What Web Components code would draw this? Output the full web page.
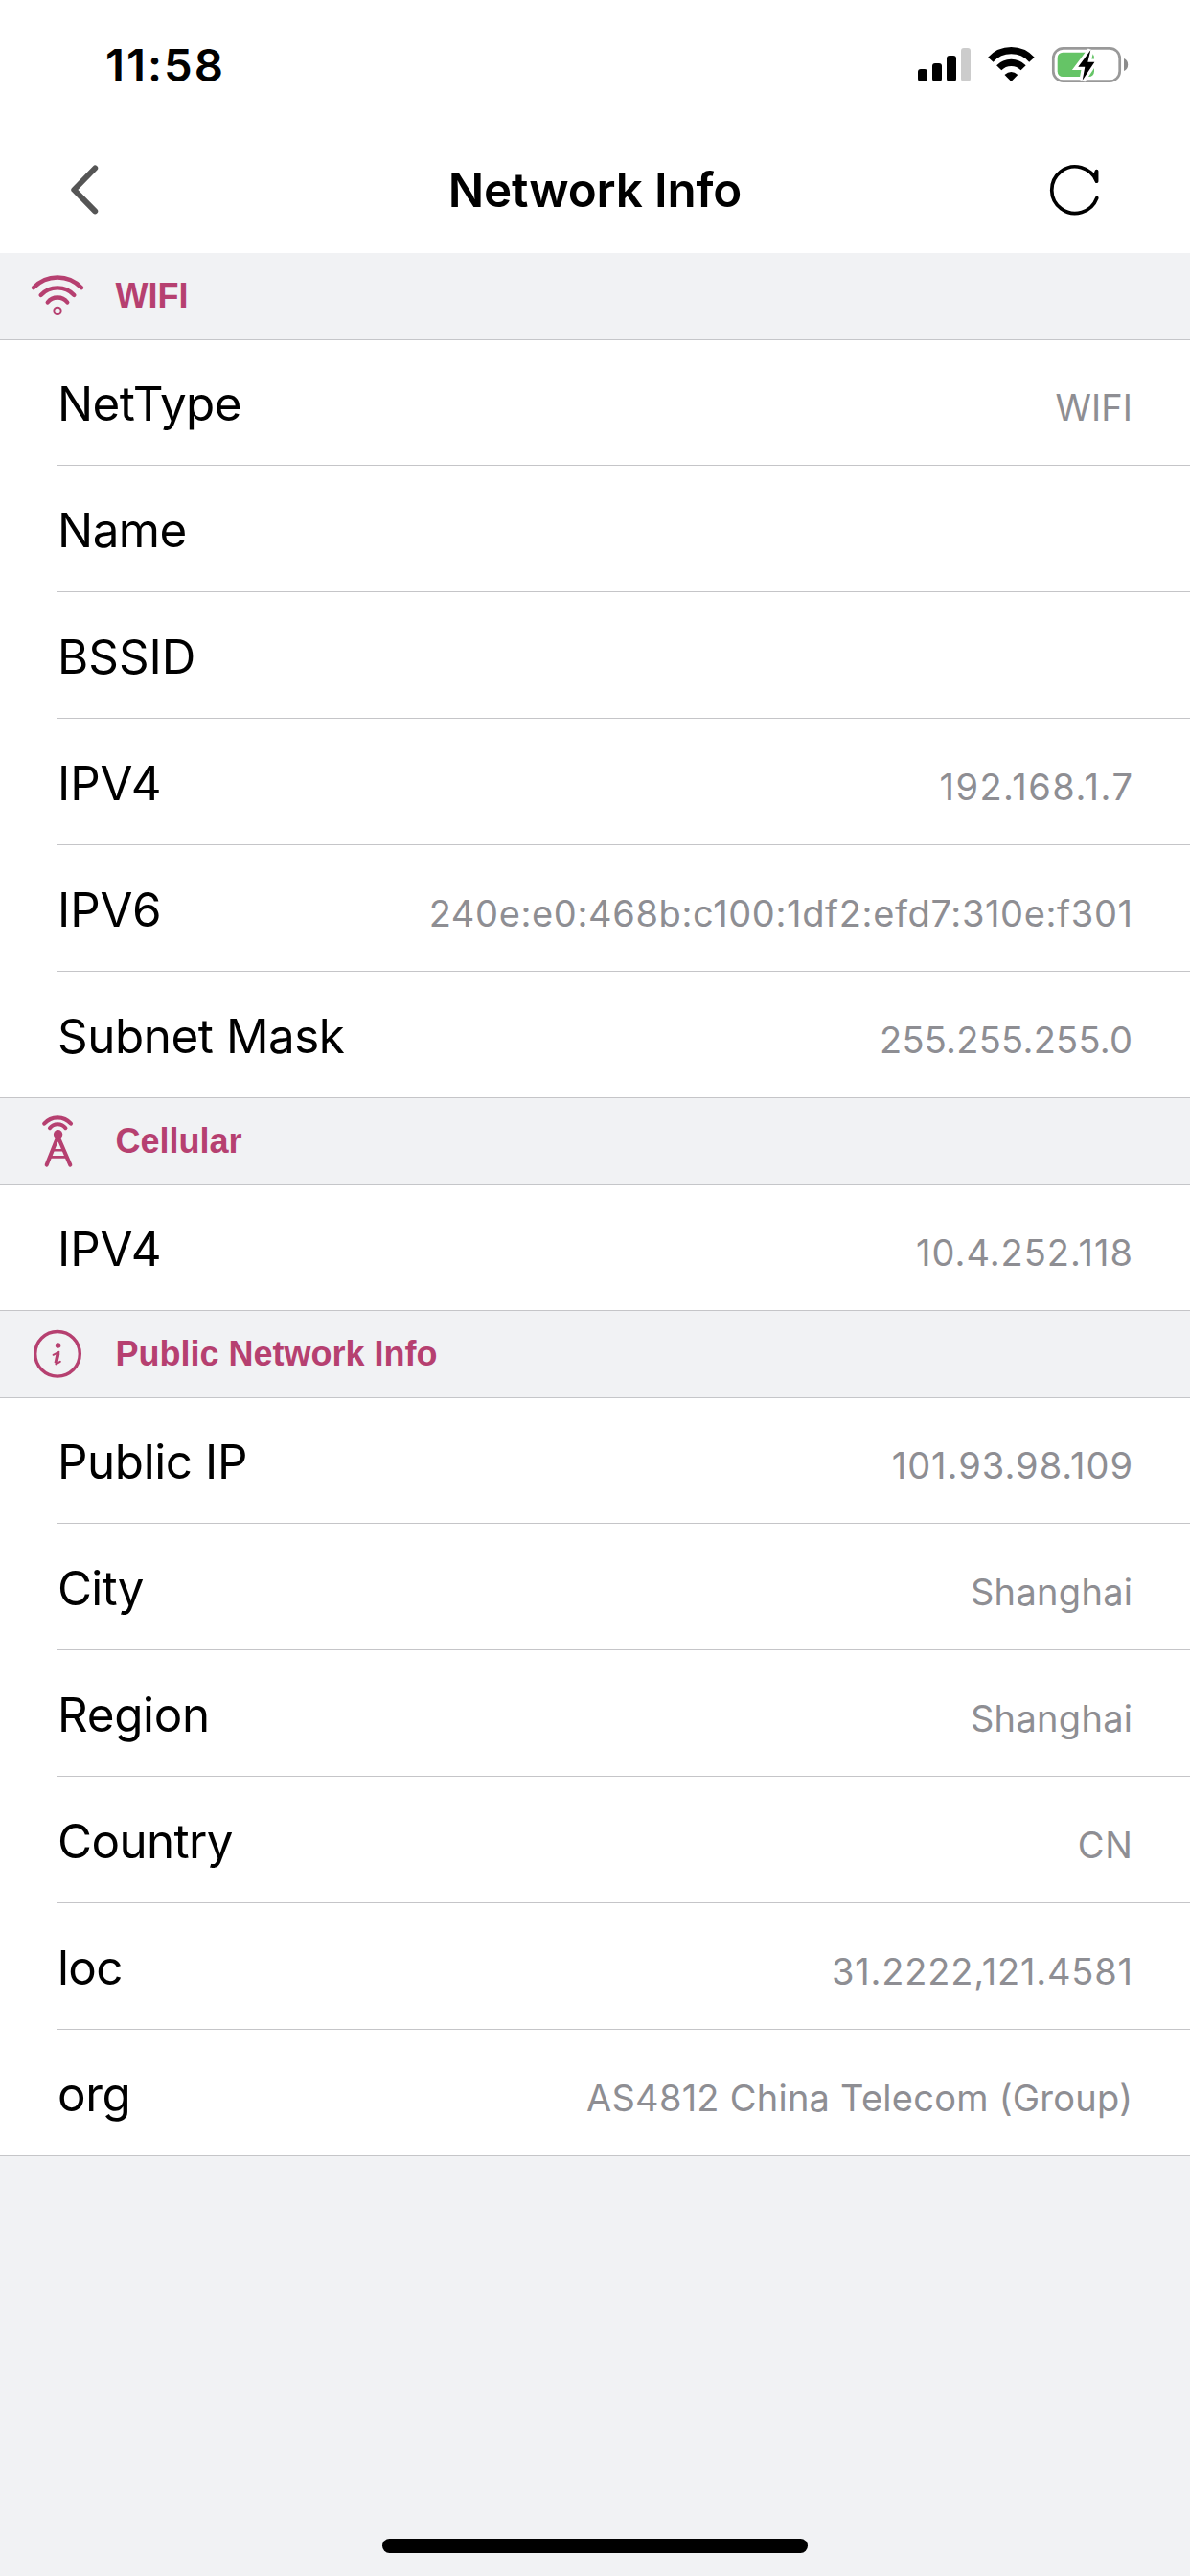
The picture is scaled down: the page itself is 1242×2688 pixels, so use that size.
<!DOCTYPE html>
<html lang="en">
<head>
<meta charset="utf-8">
<title>Network Info</title>
<style>
html,body{margin:0;height:100%}
body{background:#f1f2f4;color:#000;font-family:Inter,"Liberation Sans",sans-serif}
</style>
</head>
<body>
<net-screen>
  <status-bar slot="top">11:58</status-bar>
  <nav-bar slot="top">Network Info</nav-bar>
  <info-section icon="wifi" label="WIFI">
    <info-row label="NetType" ls="-.54" vs=".1">WIFI</info-row>
    <info-row label="Name" ls="-.5"></info-row>
    <info-row label="BSSID" ls="0"></info-row>
    <info-row label="IPV4" ls="-.1" vs="1.5">192.168.1.7</info-row>
    <info-row label="IPV6" ls="-.1" vs=".64">240e:e0:468b:c100:1df2:efd7:310e:f301</info-row>
    <info-row label="Subnet Mask" ls="-.42" vs=".26">255.255.255.0</info-row>
  </info-section>
  <info-section icon="tower" label="Cellular">
    <info-row label="IPV4" ls="-.1" vs=".98">10.4.252.118</info-row>
  </info-section>
  <info-section icon="info" label="Public Network Info">
    <info-row label="Public IP" ls="-.38" vs="1">101.93.98.109</info-row>
    <info-row label="City" ls="-.75" vs=".3">Shanghai</info-row>
    <info-row label="Region" ls="-.3" vs=".3">Shanghai</info-row>
    <info-row label="Country" ls="-.58" vs=".9">CN</info-row>
    <info-row label="loc" ls="-.6" vs=".81">31.2222,121.4581</info-row>
    <info-row label="org" ls="-.4" vs=".25">AS4812 China Telecom (Group)</info-row>
  </info-section>
  <home-indicator slot="bottom"></home-indicator>
</net-screen>
<script>
const define = (name, render) => customElements.define(name, class extends HTMLElement {
  connectedCallback() {
    if (!this.shadowRoot) this.attachShadow({mode: 'open'}).innerHTML = render(this);
  }
});

const icons = {
  wifi: `<g fill="none" stroke="currentColor" stroke-width="4.3" stroke-linecap="round">
    <path d="M34.9 36.3A34.6 34.6 0 0 1 85.1 36.3M42.6 44A23.7 23.7 0 0 1 77.4 44M49.7 51.5A13.1 13.1 0 0 1 70.3 51.5"/>
    <circle cx="60" cy="60.4" r="3.7" stroke-width="2"/></g>`,
  tower: `<g fill="none" stroke="currentColor" stroke-width="4.1" stroke-linecap="round">
    <path d="M46.2 26.7A18.4 18.4 0 0 1 74 26.7M52 31.2A10.5 10.5 0 0 1 68.4 31.2"/>
    <path d="M60.5 40L48.7 69.6M60.5 40L73.3 69.6"/>
    <path d="M55 54.3H66.5M52.5 61.4H69.5" stroke-width="2.6"/></g>
    <circle cx="60.6" cy="37.8" r="4.7" fill="currentColor"/>`,
  info: `<g fill="none" stroke="currentColor">
    <circle cx="60" cy="44.8" r="23.3" stroke-width="3.4"/>
    <path d="M55.6 45.8L61.4 42.8L58.4 55.4L62.8 52.8" stroke-width="2" stroke-linecap="round" stroke-linejoin="round"/>
    <path d="M60.6 44L58.4 54.4" stroke-width="3.8"/></g>
    <circle cx="60.6" cy="36" r="2.8" fill="currentColor"/>`
};

define('net-screen', () => `
<style>
:host{display:flex;flex-direction:column;width:1242px;height:2688px;background:#f1f2f4;overflow:hidden}
main{display:flex;flex-direction:column;flex:1}
</style>
<slot name="top"></slot><main><slot></slot></main><slot name="bottom"></slot>`);

define('status-bar', () => `
<style>
:host{display:flex;justify-content:space-between;height:132px;background:#fff;padding:0 60px 0 110px}
span{font-size:47.2px;font-weight:600;line-height:136px;letter-spacing:2px}
svg{display:block}
</style>
<span><slot></slot></span>
<svg width="232" height="132" viewBox="950 0 232 132">
  <rect x="958" y="72" width="10" height="13" rx="3"/>
  <rect x="973" y="66" width="10" height="19" rx="3"/>
  <rect x="988" y="58" width="10" height="27" rx="3"/>
  <rect x="1003" y="50" width="10" height="35" rx="3" fill="#ccc"/>
  <g fill="none" stroke="#000">
    <path d="M1033.9 62.2A29 29 0 0 1 1076.9 62.2" stroke-width="7.3"/>
    <path d="M1042.7 70.8A17.6 17.6 0 0 1 1068.1 70.8" stroke-width="7.2"/>
  </g>
  <path d="M1048.5 78Q1055.4 71.8 1062.3 78L1055.4 85Z"/>
  <rect x="1099.3" y="50.3" width="69.4" height="34.4" rx="10.5" fill="#fff" stroke="#999" stroke-width="2.7"/>
  <rect x="1103.7" y="54.7" width="38.3" height="25.3" rx="5.5" fill="#65c466"/>
  <path d="M1173 61Q1177.2 62.8 1177.2 67.5T1173 74Z" fill="#8c8c8c"/>
  <path d="M1138.3 52.3L1125.3 69.7H1132.3L1129.7 83.7L1142.4 64.7H1135.3Z" stroke="#fff" stroke-width="6.4" fill="#fff"/>
  <path d="M1138.3 52.3L1125.3 69.7H1132.3L1129.7 83.7L1142.4 64.7H1135.3Z"/>
</svg>`);

define('nav-bar', () => `
<style>
:host{display:grid;grid-template-columns:1fr auto 1fr;height:132px;background:#fff}
span{font-size:49.3px;font-weight:600;line-height:132px;letter-spacing:-.15px}
svg{display:block;fill:none;stroke-linecap:round;stroke-linejoin:round}
svg:last-child{justify-self:end}
</style>
<svg width="240" height="132" viewBox="0 132 240 132"><path d="M99.2 175.5L77.3 198L99.2 220.4" stroke="#555" stroke-width="6"/></svg>
<span><slot></slot></span>
<svg width="240" height="132" viewBox="1002 132 240 132"><path d="M1144.8 206.6A24.3 24.3 0 1 1 1144.6 189.2V178.5L1142.4 184" stroke="#000" stroke-width="3.7"/></svg>`);

define('info-section', el => `
<style>
:host{display:flex;flex-direction:column}
header{display:flex;box-sizing:border-box;height:91px;border-bottom:1px solid #c5c6c9;color:#b64070}
h2{margin:0;font:700 36px/89px "Liberation Sans",Arial,sans-serif;padding-left:.5px}
svg{display:block;flex:none}
::slotted(:first-child){--row-height:131px;--lead:0px}
::slotted(:last-child){--inset:0px;--pad:60px}
</style>
<header><svg width="120" height="90" viewBox="0 0 120 90">${icons[el.getAttribute('icon')]}</svg><h2>${el.getAttribute('label')}</h2></header>
<slot></slot>`);

define('info-row', el => {
  const a = n => el.getAttribute(n) || 0;
  return `
<style>
:host{display:block;background:#fff;padding-left:var(--inset,60px)}
div{display:flex;justify-content:space-between;align-items:baseline;box-sizing:border-box;height:var(--row-height,132px);padding:var(--lead,1px) 60px 0 var(--pad,0px);border-bottom:1px solid #c5c5c8;overflow:hidden}
.label{font-size:49.3px;line-height:132px;letter-spacing:${a('ls')}px}
.value{font-size:38px;line-height:60px;color:#8e8e93;letter-spacing:${a('vs')}px;margin-right:-${a('vs')}px}
</style>
<div><span class="label">${a('label')}</span><span class="value"><slot></slot></span></div>`;
});

define('home-indicator', () => `
<style>
:host{display:flex;justify-content:center;padding-bottom:24px}
i{width:444px;height:15px;border-radius:8px;background:#000}
</style><i></i>`);
</script>
</body>
</html>
